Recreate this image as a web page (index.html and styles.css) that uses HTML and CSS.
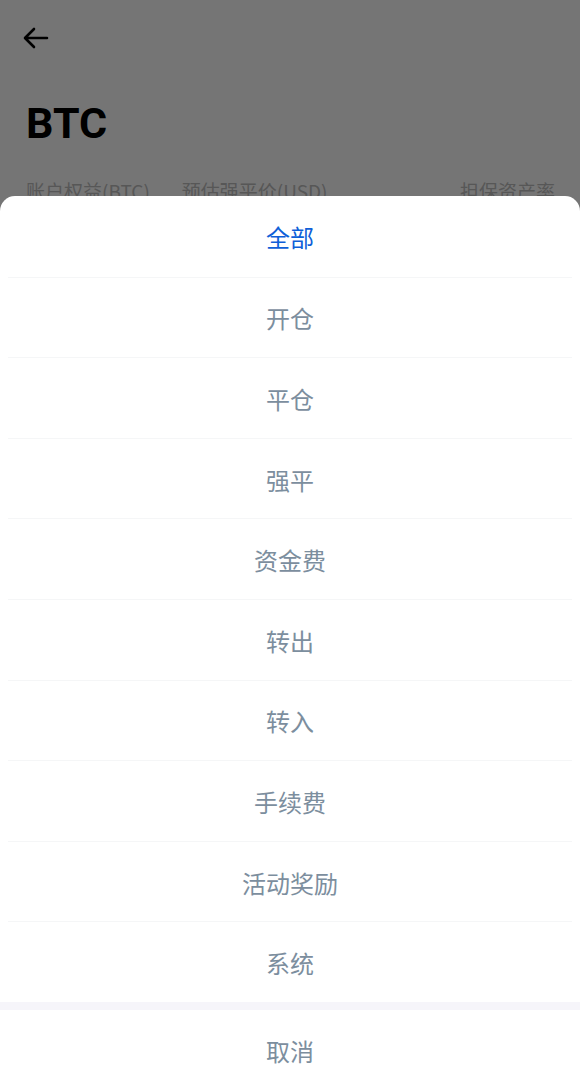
FILE: index.html
```html
<!DOCTYPE html>
<html lang="zh">
<head>
<meta charset="utf-8">
<link rel="stylesheet" href="styles.css">
</head>
<body>
<div class="page">
  <div class="topbar">
    <svg class="back" width="28" height="24" viewBox="0 0 28 24">
      <path d="M25 12H4M12 3L3 12L12 21" fill="none" stroke="#000" stroke-width="2.6" stroke-linecap="round" stroke-linejoin="round"/>
    </svg>
  </div>
  <h1 class="title">BTC</h1>
  <div class="labels">
    <span class="lab">账户权益(BTC)</span>
    <span class="lab">预估强平价(USD)</span>
    <span class="lab right">担保资产率</span>
  </div>
</div>
<div class="mask"></div>
<div class="sheet">
  <ul class="list">
    <li class="item active">全部</li>
    <li class="item">开仓</li>
    <li class="item">平仓</li>
    <li class="item">强平</li>
    <li class="item">资金费</li>
    <li class="item">转出</li>
    <li class="item">转入</li>
    <li class="item">手续费</li>
    <li class="item">活动奖励</li>
    <li class="item last">系统</li>
  </ul>
  <div class="gap"></div>
  <div class="cancel">取消</div>
</div>
</body>
</html>
```
FILE: styles.css
```css
html, body {
  margin: 0;
  padding: 0;
  width: 580px;
  height: 1090px;
  overflow: hidden;
  background: #fff;
  font-family: "Noto Sans CJK SC", "Noto Sans", sans-serif;
}
.page {
  padding: 0 25px 0 26px;
}
.topbar {
  height: 76px;
  display: flex;
  align-items: center;
}
.back {
  display: block;
  margin-left: -4px;
}
.title {
  margin: 22px 0 0;
  font-family: Roboto, "Liberation Sans", sans-serif;
  font-weight: 700;
  font-size: 43px;
  line-height: 50px;
  color: #000;
}
.labels {
  display: flex;
  margin-top: 30px;
  font-size: 19px;
  line-height: 26px;
  color: #bdbdbd;
}
.lab {
  margin-right: 32px;
}
.lab.right {
  margin: 0 0 0 auto;
}
.mask {
  position: absolute;
  inset: 0;
  background: rgba(0, 0, 0, 0.54);
}
.sheet {
  position: absolute;
  left: 0;
  right: 0;
  bottom: 0;
  background: #fff;
  border-radius: 15px 15px 0 0;
}
.list {
  list-style: none;
  margin: 0;
  padding: 0;
}
.item {
  margin: 0 8px;
  height: 80.6px;
  box-sizing: border-box;
  padding-top: 1px;
  border-bottom: 1px solid #f5f6f7;
  display: flex;
  align-items: center;
  justify-content: center;
  font-size: 24px;
  color: #7c8e9e;
}
.item.last {
  height: 79.6px;
  border-bottom: none;
}
.item.active {
  color: #0f5fd8;
  height: 82px;
}
.gap {
  height: 8px;
  background: #f6f5fa;
}
.cancel {
  height: 80px;
  padding-top: 1px;
  box-sizing: border-box;
  display: flex;
  align-items: center;
  justify-content: center;
  font-size: 24px;
  color: #7c8e9e;
}
```
